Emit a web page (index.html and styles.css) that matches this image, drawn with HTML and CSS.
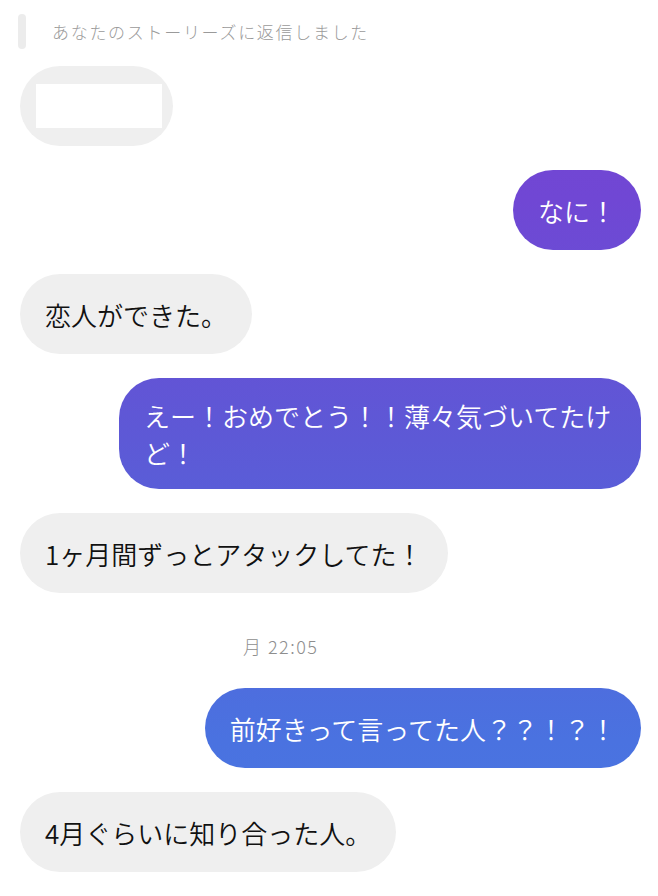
FILE: index.html
```html
<!DOCTYPE html>
<html lang="ja">

<head>
    <meta charset="UTF-8">
    <title>Messages</title>

    <link rel="stylesheet" href="styles.css">
</head>

<body>
<div class="thread">
    <div class="reply-note">
        <span class="reply-bar"></span>
        <span class="reply-text">あなたのストーリーズに返信しました</span>
    </div>

    <div class="row theirs">
        <div class="bubble story-reply"><span class="blank"></span></div>
    </div>

    <div class="row mine">
        <div class="bubble sent">なに！</div>
    </div>

    <div class="row theirs">
        <div class="bubble">恋人ができた。</div>
    </div>

    <div class="row mine">
        <div class="bubble sent">えー！おめでとう！！薄々気づいてたけど！</div>
    </div>

    <div class="row theirs">
        <div class="bubble">1ヶ月間ずっとアタックしてた！</div>
    </div>

    <div class="timestamp">月 22:05</div>

    <div class="row mine">
        <div class="bubble sent">前好きって言ってた人？？！？！</div>
    </div>

    <div class="row theirs">
        <div class="bubble">4月ぐらいに知り合った人。</div>
    </div>
</div>
</body>

</html>
```

FILE: styles.css
```css
body {
    margin: 0;
    background-color: #fff;
    font-family: "Noto Sans CJK JP", "Noto Sans", sans-serif;
}

.thread {
    display: flex;
    flex-direction: column;
    gap: 24px;
    padding: 14px 17px 0 20px;
}

.reply-note {
    display: flex;
    align-items: center;
    height: 35px;
    margin-bottom: -7px;
}

.reply-bar {
    width: 8px;
    height: 35px;
    margin-left: -2px;
    border-radius: 4px;
    background-color: #ececec;
}

.reply-text {
    margin-left: 26px;
    font-size: 17px;
    font-weight: 300;
    letter-spacing: 1.7px;
    color: #9a9a9a;
}

.row {
    display: flex;
}

.row.mine {
    justify-content: flex-end;
}

.bubble {
    box-sizing: border-box;
    max-width: 522px;
    min-height: 80px;
    display: flex;
    align-items: center;
    padding: 18.5px 25px;
    border-radius: 40px;
    background-color: #efefef;
    color: #111;
    font-size: 26px;
    font-weight: 350;
    line-height: 37px;
}

.bubble.sent {
    color: #fff;
    background-image: linear-gradient(to bottom, #7844d2 0px, #7047d4 200px, #5d59d6 440px, #4a72e0 740px, #4878e2 896px);
    background-attachment: fixed;
}

.story-reply {
    width: 153px;
    padding: 0 11px 0 16px;
}

.blank {
    display: block;
    width: 126px;
    height: 44px;
    background-color: #fff;
}

.timestamp {
    margin: 17px 0 6px 223px;
    font-size: 18px;
    font-weight: 300;
    letter-spacing: 1.5px;
    color: #8e8e8e;
    line-height: 24px;
}
```
